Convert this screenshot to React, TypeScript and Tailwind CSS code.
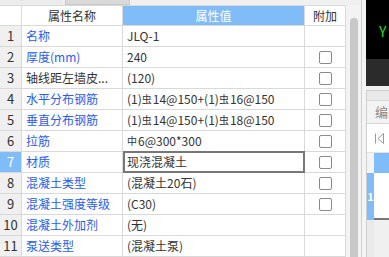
import React from "react";

type Row = {
  no: number;
  name: string;
  value: React.ReactNode;
  plain?: boolean;
  check: boolean;
  editing?: boolean;
};

// grade symbols for rebar, as the CAD font shows them
const G1 = () => <span className="inline-block text-[10px] leading-none align-[2px] mr-px">中</span>;
const G3 = () => <span className="inline-block text-[10px] leading-none align-[2px] mr-px">虫</span>;

const rows: Row[] = [
  { no: 1, name: "名称", value: "JLQ-1", check: false },
  { no: 2, name: "厚度(mm)", value: "240", check: true },
  { no: 3, name: "轴线距左墙皮...", value: "(120)", plain: true, check: true },
  {
    no: 4,
    name: "水平分布钢筋",
    value: (
      <>
        (1)<G3 />14@150+(1)<G3 />16@150
      </>
    ),
    check: true,
  },
  {
    no: 5,
    name: "垂直分布钢筋",
    value: (
      <>
        (1)<G3 />14@150+(1)<G3 />18@150
      </>
    ),
    check: true,
  },
  {
    no: 6,
    name: "拉筋",
    value: (
      <>
        <G1 />6@300*300
      </>
    ),
    check: true,
  },
  { no: 7, name: "材质", value: "现浇混凝土", check: true, editing: true },
  { no: 8, name: "混凝土类型", value: "(混凝土20石)", check: true },
  { no: 9, name: "混凝土强度等级", value: "(C30)", check: true },
  { no: 10, name: "混凝土外加剂", value: "(无)", check: false },
  { no: 11, name: "泵送类型", value: "(混凝土泵)", check: false },
];

function Checkbox() {
  return <span className="block h-[13px] w-[13px] rounded-[2px] border border-[#8a8a8a] bg-white" />;
}

export default function App() {
  return (
    <div
      className="flex h-[257px] w-[389px] overflow-hidden bg-[#f0f0f0] text-[12px] text-[#333]"
      style={{ fontFamily: '"Noto Sans CJK SC", "Noto Sans", sans-serif' }}
    >
      {/* property list panel */}
      <div className="flex w-[361px] shrink-0 flex-col">
        <div className="flex h-[10px] items-end overflow-hidden bg-[#f0f0f0]">
          <div className="flex h-[22px] w-[63px] items-center justify-center bg-[#ececec] text-[#333]">属性列表</div>
          <div className="ml-[2px] flex h-[22px] w-[65px] items-center justify-center border border-[#c8c8c8] bg-[#dadada] text-[#555]">
            图层管理
          </div>
        </div>

        <div className="flex flex-1">
          <div className="w-[346px] shrink-0 bg-white">
            {/* header */}
            <div className="flex h-[21px] border-y border-[#d9d9d9]">
              <div className="w-[22px] border-r border-[#d9d9d9] bg-white" />
              <div className="flex w-[101px] items-center justify-center border-r border-[#d9d9d9]">属性名称</div>
              <div className="flex w-[182px] items-center justify-center border-r border-[#d9d9d9] bg-[#80bcf8] text-white">
                属性值
              </div>
              <div className="flex w-[41px] items-center justify-center border-r border-[#d9d9d9]">附加</div>
            </div>

            {rows.map((r) => (
              <div key={r.no} className="flex h-[21px] border-b border-[#d9d9d9]">
                <div
                  className={
                    r.editing
                      ? "flex w-[22px] items-center justify-center border-r border-[#d9d9d9] bg-[#80bcf8] text-[13px] text-white"
                      : "flex w-[22px] items-center justify-center border-r border-[#d9d9d9] bg-[#f0f0f0] text-[13px] text-[#333]"
                  }
                >
                  {r.no}
                </div>
                <div
                  className={
                    r.plain
                      ? "flex w-[101px] items-center whitespace-nowrap border-r border-[#d9d9d9] pl-[4px] text-[#333]"
                      : "flex w-[101px] items-center whitespace-nowrap border-r border-[#d9d9d9] pl-[4px] text-[#2a5cf0]"
                  }
                >
                  {r.name}
                </div>
                <div
                  className={
                    r.editing
                      ? "-my-px flex h-[22px] w-[182px] items-center whitespace-nowrap border-2 border-[#777] pl-[2px]"
                      : "flex w-[182px] items-center whitespace-nowrap border-r border-[#d9d9d9] pl-[4px]"
                  }
                >
                  {r.value}
                </div>
                <div className="flex w-[41px] items-center justify-center border-r border-[#d9d9d9]">
                  {r.check && <Checkbox />}
                </div>
              </div>
            ))}
          </div>

          {/* scrollbar */}
          <div className="flex w-[15px] shrink-0 justify-center bg-[#f3f3f3] pt-[13px]">
            <div className="w-[8px] rounded-t-full bg-[#c8c8c8]" />
          </div>
        </div>
      </div>

      <div className="w-[5px] shrink-0 border-l border-[#cfcfcf] bg-[#f4f4f4]" />

      {/* right side: view + grid */}
      <div className="flex w-[23px] shrink-0 flex-col">
        <div className="flex h-[59px] items-center bg-black pl-[13px] pt-[4px] text-[14px] text-[#1ee01e]">Y</div>
        <div className="h-[27px] bg-[#2b2b2b]" />
        <div className="h-[4px] bg-[#f0f0f0]" />
        <div className="flex flex-1 flex-col border-l border-t border-[#cfcfcf]">
          <div className="h-[10px] border-b border-[#d6d6d6] bg-[#e9e9e9]" />
          <div className="flex h-[23px] items-center whitespace-nowrap border-b border-[#d6d6d6] bg-[#f3f3f3] pl-[8px] text-[13px] text-[#888]">
            编号
          </div>
          <div className="flex h-[29px] items-center border-b border-[#e3e3e3] bg-white pl-[8px]">
            <svg width="9" height="11" viewBox="0 0 9 11" fill="none" stroke="#9a9a9a" strokeWidth="1">
              <path d="M0.5 0.5V10.5" />
              <path d="M8.5 0.5L3 5.5L8.5 10.5Z" />
            </svg>
          </div>
          <div className="flex h-[20px]">
            <div className="w-[7px] bg-[#f3f3f3]" />
            <div className="flex-1 bg-[#80bcf8]" />
          </div>
          <div className="flex h-[47px]">
            <div className="flex w-[7px] items-center justify-center bg-[#80bcf8] text-[11px] font-bold text-white">1</div>
            <div className="flex-1 border-b-2 border-[#777] bg-white" />
          </div>
          <div className="flex flex-1">
            <div className="w-[7px] bg-[#eaeaea]" />
            <div className="flex-1 bg-[#f0f0f0]" />
          </div>
        </div>
      </div>
    </div>
  );
}
